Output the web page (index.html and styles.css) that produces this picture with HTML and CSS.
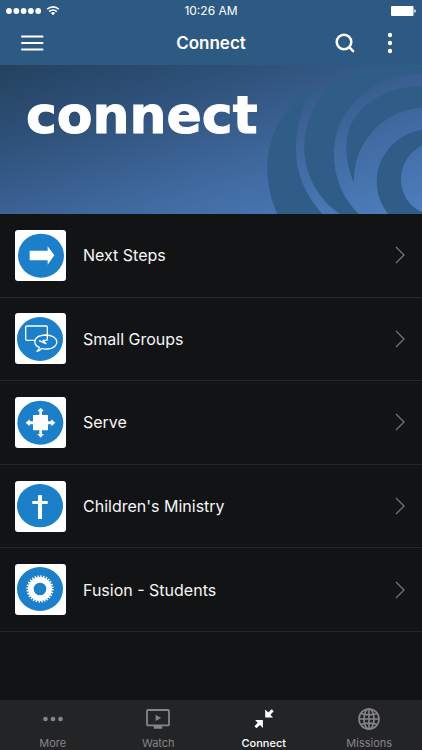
FILE: index.html
```html
<!DOCTYPE html>
<html lang="en">
<head>
<meta charset="utf-8">
<meta name="viewport" content="width=device-width, initial-scale=1">
<title>Connect</title>
<link rel="stylesheet" href="styles.css">
</head>
<body>
<div class="app">
  <header class="top">
    <div class="status">
      <span class="signal">
        <svg width="54" height="12" viewBox="0 0 54 12" fill="#fff" aria-hidden="true">
          <circle cx="3" cy="6" r="2.9"/><circle cx="10.3" cy="6" r="2.9"/><circle cx="17.6" cy="6" r="2.9"/><circle cx="24.9" cy="6" r="2.9"/><circle cx="32.2" cy="6" r="2.9"/>
          <g fill="none" stroke="#fff" stroke-width="1.6"><path d="M41.2 4.2a8.3 8.3 0 0 1 11.6 0M43.2 6.6a5.4 5.4 0 0 1 7.6 0"/></g>
          <path d="M47 10.2l-2.2-2.1a3.1 3.1 0 0 1 4.4 0z"/>
        </svg>
      </span>
      <time>10:26 AM</time>
      <span class="battery">
        <svg width="25" height="10" viewBox="0 0 25 10" fill="#fff" aria-hidden="true"><rect width="22.5" height="10" rx="1"/><path d="M23.3 3.2q1.5.3 1.5 1.8t-1.5 1.8z"/></svg>
      </span>
    </div>
    <div class="bar">
      <button class="icon-btn" type="button" aria-label="Menu">
        <svg width="24" height="16" viewBox="0 0 24 16" stroke="#fff" stroke-width="2" stroke-linecap="round" aria-hidden="true"><path d="M2 1.5h20.500M2 8h20.500M2 14.500h20.500"/></svg>
      </button>
      <h1>Connect</h1>
      <div class="actions">
        <button class="icon-btn" type="button" aria-label="Search">
          <svg width="20" height="20" viewBox="0 0 20 20" fill="none" stroke="#fff" stroke-width="2.5" stroke-linecap="round" aria-hidden="true"><circle cx="9" cy="9" r="7.3"/><path d="M14.500 14.400l3.600 3.700"/></svg>
        </button>
        <button class="icon-btn" type="button" aria-label="More options">
          <svg width="6" height="22" viewBox="0 0 6 22" fill="#fff" aria-hidden="true"><circle cx="3" cy="3" r="2.2"/><circle cx="3" cy="11" r="2.2"/><circle cx="3" cy="19" r="2.2"/></svg>
        </button>
      </div>
    </div>
  </header>

  <main>
    <section class="banner">
      <svg class="rings" viewBox="-750 3 1266 447" preserveAspectRatio="xMaxYMid slice" aria-hidden="true">
        <defs>
          <linearGradient id="fade" gradientUnits="userSpaceOnUse" x1="0" y1="10" x2="0" y2="130">
            <stop offset="0" stop-color="#2f5d88" stop-opacity=".3"/><stop offset="1" stop-color="#2f5d88"/>
          </linearGradient>
        </defs>
        <path fill="url(#fade)" d="M200 60C104 116 52 212 52 312C52 364 64 412 82 450H217C168 396 138 332 138 256C138 180 160 112 200 60Z"/>
        <path fill="#2f5d88" d="M270 450C204 406 163 332 163 250C163 140 234 44 350 3H480Q500 4 516 12V27C372 27 252 134 252 272C252 342 280 404 326 450Z"/>
        <path fill="#2f5d88" d="M516 66C388 66 289 146 289 246C289 288 298 326 312 356C308 240 394 138 516 131Z"/>
        <path fill="#2f5d88" d="M516 197C436 210 380 276 380 354C380 390 394 424 415 450H516V445C478 428 453 390 453 346C453 302 478 262 516 245Z"/>
      </svg>
      <p class="banner-title">connect</p>
    </section>

    <ul class="list">
      <li><a class="row" href="#next-steps">
        <svg class="thumb" viewBox="0 0 153 153" aria-hidden="true"><ellipse class="disc" cx="78" cy="77" rx="69" ry="66"/><path fill="#fff" d="M44 62H98V49L118 76L98 104V91H44Z"/></svg>
        <span>Next Steps</span>
        <svg class="chevron" viewBox="0 0 10 18" aria-hidden="true"><path d="M1 1l8 8-8 8"/></svg>
      </a></li>
      <li><a class="row" href="#small-groups">
        <svg class="thumb" viewBox="0 0 153 153" aria-hidden="true"><ellipse class="disc" cx="75" cy="78" rx="69" ry="66"/><g fill="none" stroke="#fff" stroke-width="4" stroke-linejoin="round"><path d="M61 82H36Q32 82 32 78V43Q32 39 36 39H93Q97 39 97 43V78Q97 82 93 82H84L93 92L72 83"/><path d="M73 103C50 95 56 67 91 66C135 66 137 105 97 108Q87 109 80 106Q75 113 66 115Q73 109 73 103Z"/></g></svg>
        <span>Small Groups</span>
        <svg class="chevron" viewBox="0 0 10 18" aria-hidden="true"><path d="M1 1l8 8-8 8"/></svg>
      </a></li>
      <li><a class="row" href="#serve">
        <svg class="thumb" viewBox="0 0 153 153" aria-hidden="true"><ellipse class="disc" cx="76" cy="77" rx="69" ry="66"/><path fill="#fff" d="M77 32L87 43H81V54H99V73H109V67L121 77L109 88V82H99V100H81V111H87L77 122L67 111H73V100H54V82H44V88L32 77L44 67V73H54V54H73V43H67Z"/></svg>
        <span>Serve</span>
        <svg class="chevron" viewBox="0 0 10 18" aria-hidden="true"><path d="M1 1l8 8-8 8"/></svg>
      </a></li>
      <li><a class="row" href="#childrens-ministry">
        <svg class="thumb" viewBox="0 0 153 153" aria-hidden="true"><ellipse class="disc" cx="75" cy="74" rx="69" ry="65"/><path fill="#fff" d="M69 42H81V60H98V69H81V114H69V69H52V60H69Z"/></svg>
        <span>Children's Ministry</span>
        <svg class="chevron" viewBox="0 0 10 18" aria-hidden="true"><path d="M1 1l8 8-8 8"/></svg>
      </a></li>
      <li><a class="row" href="#fusion-students">
        <svg class="thumb" viewBox="0 0 153 153" aria-hidden="true"><ellipse class="disc" cx="75" cy="75" rx="69" ry="66"/><g fill="none" stroke="#fff"><circle cx="75" cy="75" r="27.500" stroke-width="17"/><circle cx="75" cy="75" r="38" stroke-width="6" pathLength="56" stroke-dasharray="1 1"/></g></svg>
        <span>Fusion - Students</span>
        <svg class="chevron" viewBox="0 0 10 18" aria-hidden="true"><path d="M1 1l8 8-8 8"/></svg>
      </a></li>
    </ul>
  </main>

  <nav class="tabs">
    <a href="#more">
      <svg width="24" height="24" viewBox="0 0 24 24" fill="currentColor" aria-hidden="true"><circle cx="4.5" cy="12" r="2.3"/><circle cx="12" cy="12" r="2.3"/><circle cx="19.5" cy="12" r="2.3"/></svg>
      <span>More</span>
    </a>
    <a href="#watch">
      <svg width="24" height="24" viewBox="0 0 24 24" fill="currentColor" aria-hidden="true"><rect x="1" y="3" width="22" height="15.4" rx="1" fill="none" stroke="currentColor" stroke-width="1.8"/><path d="M9.6 7.7l5.5 3.2-5.5 3.2zM7.8 19h8.4v2.7H7.8z"/></svg>
      <span>Watch</span>
    </a>
    <a class="active" href="#connect" aria-current="page">
      <svg width="24" height="24" viewBox="0 0 24 24" fill="currentColor" aria-hidden="true"><path d="M13.2 2.6v7.8h7.9l-2.7-2.6 3.3-3.6-2-1.9-3.5 3.3zM10.9 20.9v-7.8H3.1l2.6 2.6-3.2 3.6 1.9 1.9 3.6-3.3z"/></svg>
      <span>Connect</span>
    </a>
    <a href="#missions">
      <svg width="24" height="24" viewBox="0 0 24 24" fill="none" stroke="currentColor" stroke-width="1.6" aria-hidden="true"><circle cx="12" cy="12" r="10"/><ellipse cx="12" cy="12" rx="5" ry="10"/><path d="M12 2v20M2 12h20M4 6.5q8 2.8 16 0M4 17.5q8-2.8 16 0"/></svg>
      <span>Missions</span>
    </a>
  </nav>
</div>
</body>
</html>
```
FILE: styles.css
```css
* {
  box-sizing: border-box;
}

body {
  margin: 0;
  background: #121315;
  color: #f6f6f6;
  font-family: Inter, Roboto, sans-serif;
}

a {
  color: inherit;
  text-decoration: none;
}

svg {
  display: block;
  flex: none;
}

.app {
  display: flex;
  flex-direction: column;
  min-height: 100vh;
}

main {
  flex: 1;
}

.top {
  background: #2d5a83;
  color: #fff;
}

.status,
.bar {
  display: grid;
  grid-template-columns: 1fr auto 1fr;
  align-items: center;
}

.status {
  height: 21px;
  padding: 0 6px;
  font-size: 12px;
  line-height: 20px;
}

.battery {
  justify-self: end;
}

.bar {
  height: 44px;
  padding: 0 16px;
}

.bar h1 {
  margin: 0;
  font-size: 17px;
  line-height: 24px;
  font-weight: 600;
}

.icon-btn {
  display: flex;
  align-items: center;
  justify-content: center;
  width: 32px;
  height: 32px;
  padding: 0;
  border: 0;
  background: none;
}

.actions {
  display: flex;
  justify-content: flex-end;
  gap: 13px;
}

.banner {
  position: relative;
  min-height: 149px;
  padding: 20px 26px;
  background: linear-gradient(163deg, #24425f 0%, #2f527b 30%, #416ba2 68%, #4d7fbd 100%);
}

.rings {
  position: absolute;
  inset: 0;
  width: 100%;
  height: 100%;
}

.banner-title {
  position: relative;
  margin: 0;
  color: #fff;
  font: bold 52px/60px "DejaVu Sans", Verdana, sans-serif;
  -webkit-text-stroke: 1px #fff;
}

.list {
  display: grid;
  grid-auto-rows: 1fr;
  min-height: 418px;
  margin: 0;
  padding: 0;
  list-style: none;
}

.list li {
  display: grid;
  border-bottom: 1px solid #252628;
}

.row {
  display: flex;
  align-items: center;
  gap: 17px;
  padding: 0 17px 0 15px;
  font-size: 16px;
  line-height: 24px;
}

.row span {
  flex: 1;
}

.thumb {
  width: 51px;
  height: 51px;
  border-radius: 3px;
  background: #fff;
}

.disc {
  fill: #1b7fca;
}

.chevron {
  width: 10px;
  height: 18px;
  fill: none;
  stroke: #77787a;
  stroke-width: 1.2;
}

.tabs {
  position: sticky;
  bottom: 0;
  display: grid;
  grid-template-columns: repeat(4, 1fr);
  height: 50px;
  padding-top: 7px;
  background: #232426;
  color: #858587;
}

.tabs a {
  display: flex;
  flex-direction: column;
  align-items: center;
  gap: 5px;
  font-size: 11px;
  line-height: 14px;
}

.tabs .active {
  color: #fff;
  font-weight: 500;
}
```
